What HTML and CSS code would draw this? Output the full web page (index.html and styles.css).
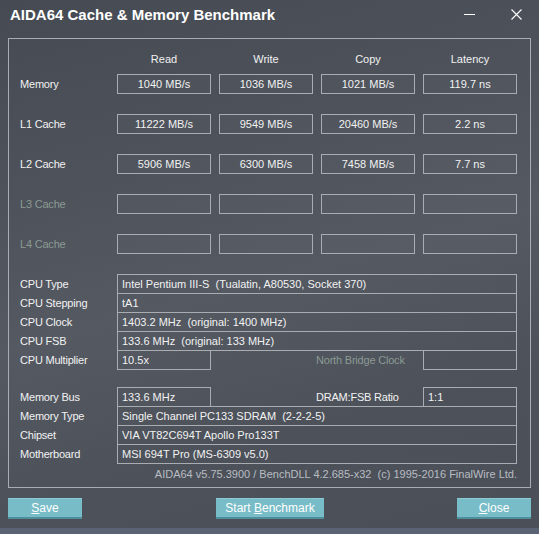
FILE: index.html
```html
<!DOCTYPE html>
<html lang="en">
<head>
    <meta charset="UTF-8">
    <title>AIDA64 Cache &amp; Memory Benchmark</title>
    <link rel="stylesheet" href="styles.css">
</head>
<body>
<div class="window">
    <div class="titlebar">
        <span class="title">AIDA64 Cache &amp; Memory Benchmark</span>
        <span class="btn-min"></span>
        <svg class="btn-close" width="11" height="11" viewBox="0 0 11 11">
            <path d="M0.5 0.5 L10.5 10.5 M10.5 0.5 L0.5 10.5" stroke="#ffffff" stroke-width="1.1" fill="none"/>
        </svg>
    </div>

    <div class="group">
        <div class="bench">
            <div class="bench-row head">
                <span class="lbl"></span>
                <span class="col">Read</span>
                <span class="col">Write</span>
                <span class="col">Copy</span>
                <span class="col">Latency</span>
            </div>
            <div class="bench-row">
                <span class="lbl">Memory</span>
                <span class="cell">1040 MB/s</span>
                <span class="cell">1036 MB/s</span>
                <span class="cell">1021 MB/s</span>
                <span class="cell">119.7 ns</span>
            </div>
            <div class="bench-row">
                <span class="lbl">L1 Cache</span>
                <span class="cell">11222 MB/s</span>
                <span class="cell">9549 MB/s</span>
                <span class="cell">20460 MB/s</span>
                <span class="cell">2.2 ns</span>
            </div>
            <div class="bench-row">
                <span class="lbl">L2 Cache</span>
                <span class="cell">5906 MB/s</span>
                <span class="cell">6300 MB/s</span>
                <span class="cell">7458 MB/s</span>
                <span class="cell">7.7 ns</span>
            </div>
            <div class="bench-row">
                <span class="lbl off">L3 Cache</span>
                <span class="cell"></span>
                <span class="cell"></span>
                <span class="cell"></span>
                <span class="cell"></span>
            </div>
            <div class="bench-row">
                <span class="lbl off">L4 Cache</span>
                <span class="cell"></span>
                <span class="cell"></span>
                <span class="cell"></span>
                <span class="cell"></span>
            </div>
        </div>

        <div class="info">
            <div class="info-row">
                <span class="lbl">CPU Type</span>
                <span class="val wide">Intel Pentium III-S&nbsp; (Tualatin, A80530, Socket 370)</span>
            </div>
            <div class="info-row">
                <span class="lbl">CPU Stepping</span>
                <span class="val wide">tA1</span>
            </div>
            <div class="info-row">
                <span class="lbl">CPU Clock</span>
                <span class="val wide">1403.2 MHz&nbsp; (original: 1400 MHz)</span>
            </div>
            <div class="info-row">
                <span class="lbl">CPU FSB</span>
                <span class="val wide">133.6 MHz&nbsp; (original: 133 MHz)</span>
            </div>
            <div class="info-row">
                <span class="lbl">CPU Multiplier</span>
                <span class="val short">10.5x</span>
                <span class="lbl2 off">North Bridge Clock</span>
                <span class="val short"></span>
            </div>
        </div>

        <div class="info">
            <div class="info-row">
                <span class="lbl">Memory Bus</span>
                <span class="val short">133.6 MHz</span>
                <span class="lbl2">DRAM:FSB Ratio</span>
                <span class="val short">1:1</span>
            </div>
            <div class="info-row">
                <span class="lbl">Memory Type</span>
                <span class="val wide">Single Channel PC133 SDRAM&nbsp; (2-2-2-5)</span>
            </div>
            <div class="info-row">
                <span class="lbl">Chipset</span>
                <span class="val wide">VIA VT82C694T Apollo Pro133T</span>
            </div>
            <div class="info-row">
                <span class="lbl">Motherboard</span>
                <span class="val wide">MSI 694T Pro (MS-6309 v5.0)</span>
            </div>
        </div>

        <div class="footer">AIDA64 v5.75.3900 / BenchDLL 4.2.685-x32&nbsp; (c) 1995-2016 FinalWire Ltd.</div>
    </div>

    <div class="buttons">
        <span class="button small"><u>S</u>ave</span>
        <span class="button mid">Start <u>B</u>enchmark</span>
        <span class="button small last"><u>C</u>lose</span>
    </div>
    <div class="strip"></div>
</div>
</body>
</html>
```

FILE: styles.css
```css
body {
    margin: 0;
    padding: 0;
}

.window {
    width: 539px;
    height: 534px;
    box-sizing: border-box;
    padding: 0 8px 0 8px;
    position: relative;
    overflow: hidden;
    color: #f2f2f2;
    font: 11px "Liberation Sans", Arial, sans-serif;
    background: linear-gradient(165deg, #454a53 0%, #4d525b 30%, #545962 52%, #4c515a 75%, #4a4f58 100%);
}

.titlebar {
    height: 38px;
    display: flex;
    align-items: flex-start;
}

.title {
    font: bold 15px "Liberation Sans", Arial, sans-serif;
    padding: 6px 0 0 2px;
    flex: 1;
    color: #ffffff;
}

.btn-min {
    width: 11px;
    height: 1px;
    background: #ffffff;
    margin: 14px 36px 0 0;
}

.btn-close {
    margin: 9px 9px 0 0;
}

/* group box */
.group {
    height: 450px;
    box-sizing: border-box;
    border: 1px solid #a9adb2;
    padding: 10px 0 0 11px;
}

.bench-row {
    display: flex;
    height: 20px;
    margin-bottom: 20px;
}

.bench-row.head {
    margin-bottom: 5px;
}

.lbl {
    width: 97px;
    flex: none;
    line-height: 20px;
    letter-spacing: -0.2px;
}

.off {
    color: #8c9a93;
}

.col {
    width: 94px;
    margin-right: 8px;
    text-align: center;
    line-height: 20px;
}

.cell {
    width: 94px;
    height: 20px;
    box-sizing: border-box;
    margin-right: 8px;
    border: 1px solid #a9adb2;
    background: rgba(255, 255, 255, 0.02);
    text-align: center;
    line-height: 18px;
}

.info {
    margin-bottom: 18px;
}

.info-row {
    display: flex;
    height: 19px;
}

.val {
    height: 20px;
    flex: none;
    box-sizing: border-box;
    border: 1px solid #a9adb2;
    padding-left: 4px;
    line-height: 18px;
    white-space: nowrap;
}

.val.wide {
    width: 400px;
}

.val.short {
    width: 94px;
}

.lbl2 {
    width: 212px;
    flex: none;
    padding-left: 105px;
    box-sizing: border-box;
    line-height: 20px;
    letter-spacing: -0.2px;
    white-space: nowrap;
}

.footer {
    width: 497px;
    text-align: right;
    color: #b9bdc2;
    margin-top: -14px;
    line-height: 14px;
}

.buttons {
    display: flex;
    padding-top: 10px;
}

.button {
    height: 21px;
    box-sizing: border-box;
    background: #78bcc8;
    border-bottom: 2px solid #4e8f9b;
    border-top: 1px solid #8ccbd6;
    text-align: center;
    line-height: 18px;
    font-size: 12px;
    color: #ffffff;
}

.button.small {
    width: 74px;
}

.button.mid {
    width: 108px;
    margin-left: 134px;
}

.button.last {
    margin-left: auto;
}

.strip {
    position: absolute;
    left: 0;
    bottom: 0;
    width: 539px;
    height: 6px;
    background: #5a6374;
}
```
